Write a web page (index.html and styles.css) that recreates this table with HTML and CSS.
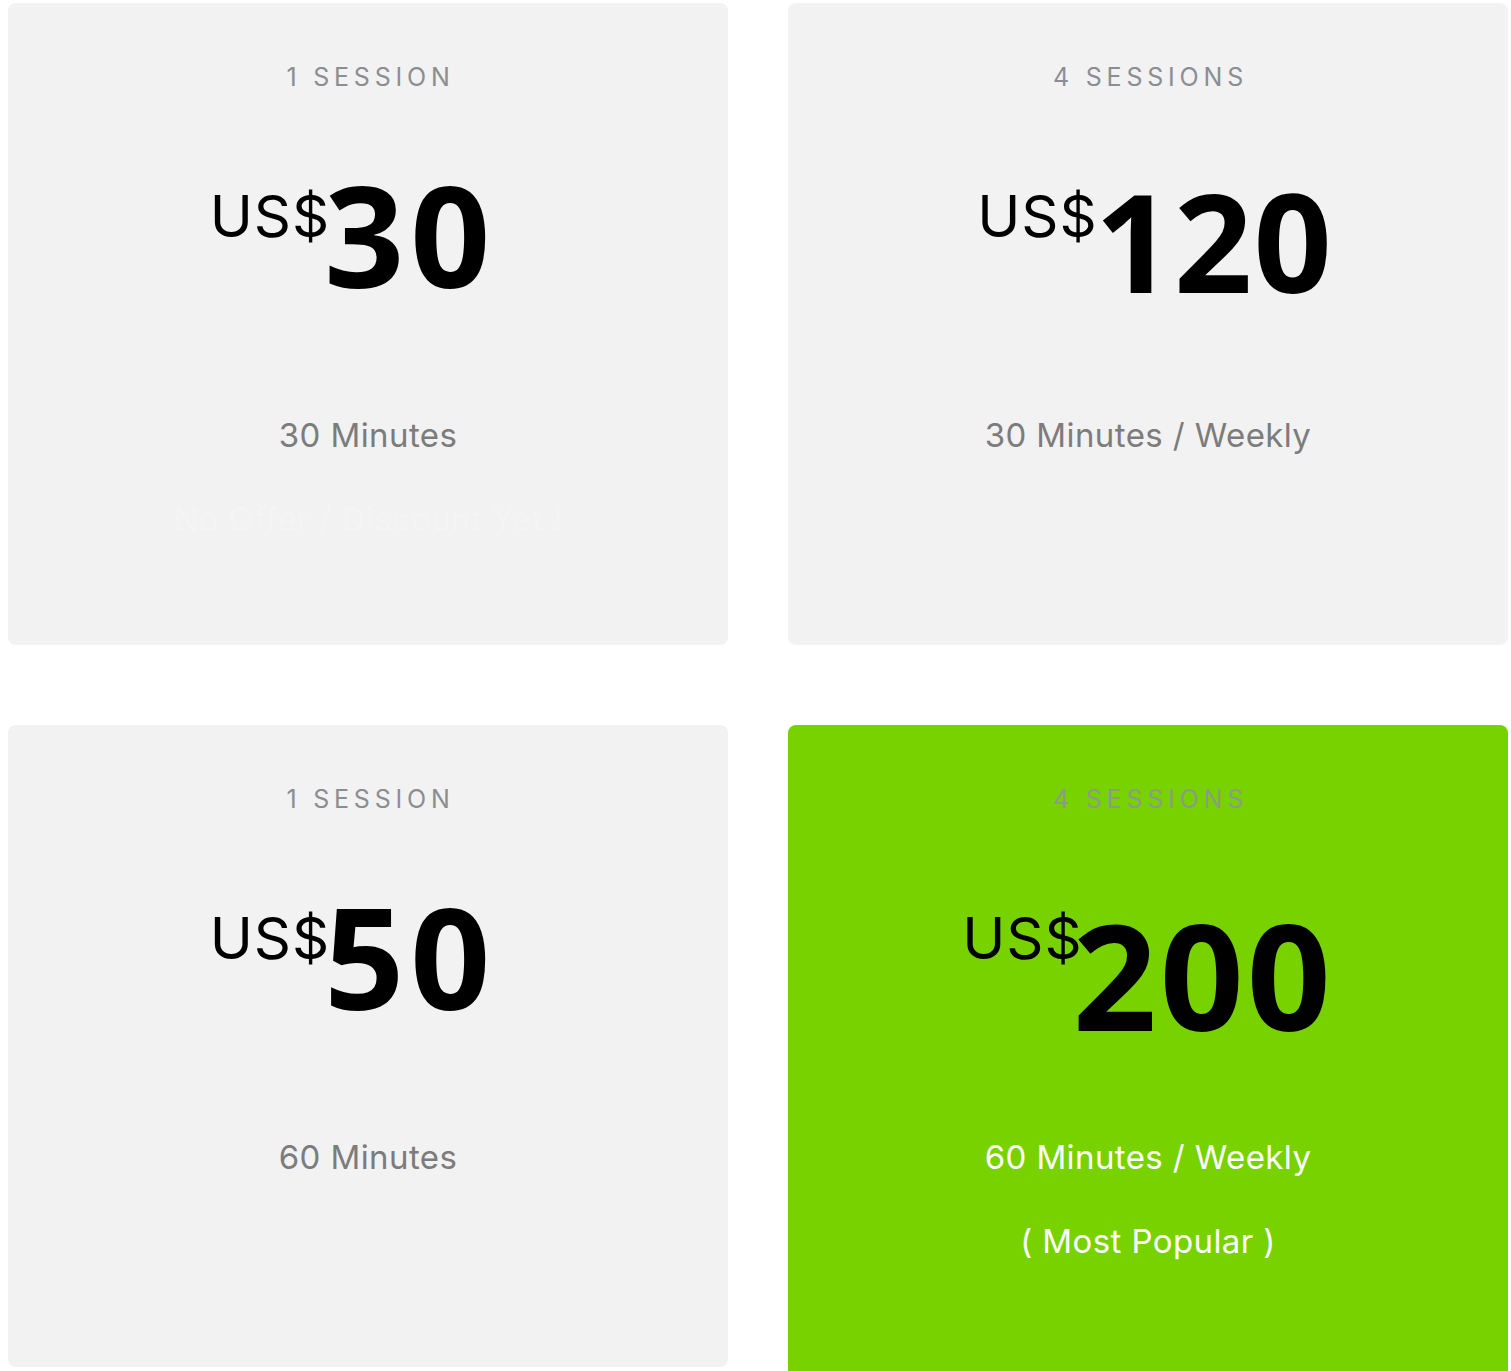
FILE: index.html
```html
<!DOCTYPE html>
<html lang="en">
<head>
<meta charset="utf-8">
<title>Pricing</title>
<link rel="stylesheet" href="styles.css">
</head>
<body>
<main class="plans">
  <section class="card">
    <h3 class="label">1 Session</h3>
    <div class="price price--sm"><span class="cur">US$</span><span class="amt">30</span></div>
    <p class="dur">30 Minutes</p>
    <p class="note note--faint">No Offer / Discount Yet !</p>
  </section>
  <section class="card">
    <h3 class="label">4 Sessions</h3>
    <div class="price price--md"><span class="cur">US$</span><span class="amt">120</span></div>
    <p class="dur">30 Minutes / Weekly</p>
    <p class="note note--hidden">&nbsp;</p>
  </section>
  <section class="card">
    <h3 class="label">1 Session</h3>
    <div class="price price--sm"><span class="cur">US$</span><span class="amt">50</span></div>
    <p class="dur">60 Minutes</p>
    <p class="note note--hidden">&nbsp;</p>
  </section>
  <section class="card card--featured">
    <h3 class="label">4 Sessions</h3>
    <div class="price price--lg"><span class="cur">US$</span><span class="amt">200</span></div>
    <p class="dur">60 Minutes / Weekly</p>
    <p class="note">( Most Popular )</p>
  </section>
</main>
</body>
</html>
```
FILE: styles.css
```css
* { box-sizing: border-box; }
html, body { margin: 0; padding: 0; background: #ffffff; }
body { font-family: Inter, "Open Sans", sans-serif; }

.plans {
  display: grid;
  grid-template-columns: 720px 720px;
  column-gap: 60px;
  row-gap: 80px;
  align-items: start;
  padding: 3px 3px 0 8px;
}

.card {
  background: #f2f2f2;
  border-radius: 8px;
  display: flex;
  flex-direction: column;
  align-items: center;
  text-align: center;
  padding: 62px 20px 109px;
}

.card--featured {
  background: #77d200;
  padding-bottom: 200px;
}

.label {
  margin: 0;
  font-weight: 400;
  font-size: 25px;
  line-height: 1;
  letter-spacing: 4.8px;
  text-transform: uppercase;
  color: #8a8e92;
  padding-left: 5px;
}

.price {
  display: flex;
  align-items: flex-start;
  margin-top: 76px;
  color: #000;
  height: 137px;
}

.cur {
  font-family: Inter, sans-serif;
  font-size: 58px;
  line-height: 1;
  margin-top: 21px;
  font-weight: 400;
  letter-spacing: 1px;
}

.amt {
  font-family: "Open Sans", sans-serif;
  font-weight: 700;
  font-size: 137px;
  line-height: 1;
}

.price--sm { margin-right: 30px; }
.price--sm .amt { letter-spacing: 6px; margin-left: -6px; font-size: 140px; margin-top: -2px; }
.price--md .amt { font-size: 137px; margin-top: 6px; letter-spacing: 1px; margin-left: -3px; }
.price--md { margin-left: 14px; }
.price--lg .amt { font-size: 147px; margin-top: 13px; letter-spacing: 3px; margin-left: -10px; }

.dur {
  margin: 116px 0 0;
  font-size: 33px;
  line-height: 1;
  letter-spacing: 0.4px;
  color: #7c7c7c;
}

.note {
  margin: 51px 0 0;
  font-size: 33px;
  line-height: 1;
  letter-spacing: 0.4px;
  color: #fff;
}

.note--faint { color: #f4f4f4; }
.note--hidden { visibility: hidden; }

.card--featured .dur { color: #fff; }
.card--featured .label { color: #8b9b87; }
```
